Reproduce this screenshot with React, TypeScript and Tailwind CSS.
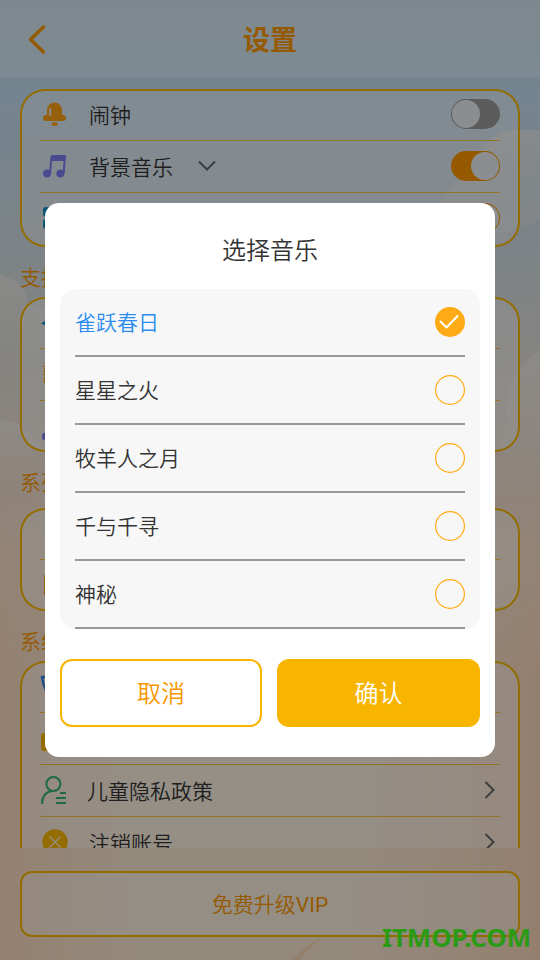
import type { ReactNode } from "react";

const songs = ["雀跃春日", "星星之火", "牧羊人之月", "千与千寻", "神秘"];

function Sky() {
  return (
    <svg
      className="absolute inset-0 h-full w-full"
      viewBox="0 0 540 960"
      preserveAspectRatio="none"
    >
      <defs>
        <linearGradient id="sky" x1="0" y1="0" x2="0" y2="1">
          <stop offset="0" stopColor="#c0dae8" />
          <stop offset="0.1" stopColor="#c2dcf0" />
          <stop offset="0.25" stopColor="#cfdbe0" />
          <stop offset="0.36" stopColor="#dddcd8" />
          <stop offset="0.46" stopColor="#e8ddd2" />
          <stop offset="0.6" stopColor="#f8e4d0" />
          <stop offset="1" stopColor="#fae4cc" />
        </linearGradient>
        <linearGradient id="glow" x1="0" y1="0" x2="1" y2="0">
          <stop offset="0" stopColor="#f6cdae" stopOpacity="0.6" />
          <stop offset="0.25" stopColor="#f3e6d0" stopOpacity="0.5" />
          <stop offset="0.65" stopColor="#f3e6d0" stopOpacity="0.5" />
          <stop offset="1" stopColor="#f6ceb0" stopOpacity="0.7" />
        </linearGradient>
        <linearGradient id="fade" x1="0" y1="0" x2="0" y2="1">
          <stop offset="0" stopColor="#fff" stopOpacity="0" />
          <stop offset="0.5" stopColor="#fff" />
        </linearGradient>
        <mask id="low">
          <rect y="400" width="540" height="560" fill="url(#fade)" />
        </mask>
        <linearGradient id="cloud" x1="0" y1="0" x2="0" y2="1">
          <stop offset="0" stopColor="#f1ece8" stopOpacity="0.6" />
          <stop offset="1" stopColor="#f4eae2" stopOpacity="0.1" />
        </linearGradient>
      </defs>
      <rect width="540" height="960" fill="url(#sky)" />
      <rect y="400" width="540" height="560" fill="url(#glow)" mask="url(#low)" />
      <path
        d="M440 203C450 192 452 180 470 178C474 150 490 128 525 130L540 130V200C510 222 480 232 440 240Z"
        fill="url(#cloud)"
      />
      <path
        d="M470 230C505 222 525 208 540 200V220C520 228 500 234 470 238Z"
        fill="#f1ece8"
        opacity="0.35"
      />
      <path d="M0 275C18 279 30 292 27 305C50 305 70 330 80 348H0Z" fill="url(#cloud)" />
      <path d="M0 420C20 419 36 435 44 455V480H0Z" fill="url(#cloud)" />
      <path d="M540 350C515 368 502 395 507 418C502 440 500 470 480 495H540Z" fill="url(#cloud)" />
      <path d="M292 960Q306 944 322 938Q306 950 300 960Z" fill="#f3c9a4" opacity="0.6" />
    </svg>
  );
}

function BellIcon() {
  return (
    <svg width="24" height="24" viewBox="0 0 24 24">
      <path
        d="M4 13V8a7.500 7.500 0 0 1 15 0v5h1a3 3 0 0 1 0 6h-17a3 3 0 0 1 0-6z"
        fill="#f89e14"
      />
      <rect x="6.200" y="6" width="2" height="8" rx="1" fill="#e9edef" />
      <rect x="8.500" y="20.300" width="6" height="3.400" rx="1.500" fill="#f89e14" />
    </svg>
  );
}

function NotesIcon() {
  return (
    <svg width="24" height="24" viewBox="0 0 24 24">
      <path d="M8.500 3L7 19.500M21.800 3l-1.100 16.500" stroke="#7c7cf0" strokeWidth="2" fill="none" />
      <path d="M7.500 3a2 2 0 0 1 2-2H23l-.5 6H7.300z" fill="#7c7cf0" />
      <circle cx="4" cy="19.400" r="4" fill="#7c7cf0" />
      <circle cx="17.400" cy="19.400" r="4" fill="#7c7cf0" />
    </svg>
  );
}

function GridIcon() {
  return (
    <svg width="24" height="24" viewBox="0 0 24 24" fill="#1590c5">
      <rect x="1" y="1" width="10" height="10" rx="3" />
      <rect x="13" y="1" width="10" height="10" rx="3" />
      <rect x="1" y="13" width="10" height="10" rx="3" />
      <rect x="13" y="13" width="10" height="10" rx="3" />
    </svg>
  );
}

function PersonIcon() {
  return (
    <svg width="28" height="28" viewBox="0 0 28 28" fill="none" stroke="#36b078" strokeWidth="2">
      <circle cx="13.400" cy="8" r="7" />
      <path d="M2 28C2 20.500 6 15.500 12 15M20 17h6M16 22h10M16 27h10" />
    </svg>
  );
}

function CloseIcon() {
  return (
    <svg width="26" height="26" viewBox="0 0 26 26">
      <circle cx="13" cy="13" r="12.700" fill="#f7b500" />
      <path d="M7.500 7.500l11 11M18.500 7.500l-11 11" stroke="#f5efe4" strokeWidth="1.200" />
    </svg>
  );
}

function Toggle({ on }: { on?: boolean }) {
  return (
    <span
      className={`flex h-[30px] w-[49px] items-center rounded-full p-px ${
        on ? "justify-end bg-[#f89600]" : "justify-start bg-[#999999]"
      }`}
    >
      <span className="h-7 w-7 rounded-full bg-[#e8edf1]" />
    </span>
  );
}

function RowArrow() {
  return (
    <svg className="mr-1 ml-auto" width="12" height="18" viewBox="0 0 12 18" fill="none">
      <path d="M1.500 1l8 8-8 8" stroke="#666" strokeWidth="2" />
    </svg>
  );
}

function Row({
  icon,
  label,
  children,
  last,
  narrow,
}: {
  icon?: ReactNode;
  label?: string;
  children?: ReactNode;
  last?: boolean;
  narrow?: boolean;
}) {
  return (
    <div
      className={`flex h-[52px] shrink-0 items-center ${
        last ? "pb-0.5" : "border-b border-[#f5b400]/75 pb-px"
      }`}
    >
      <span className={`flex shrink-0 items-center ${narrow ? "w-[47px]" : "w-[49px]"}`}>
        {icon}
      </span>
      <span className="text-[21px] leading-[30px] text-[#333]">{label}</span>
      {children}
    </div>
  );
}

function Card({ className, children }: { className: string; children: ReactNode }) {
  return (
    <div
      className={`flex shrink-0 flex-col overflow-hidden rounded-[25px] bg-white/35 px-5 ring-2 ring-[#f5b400] ring-inset ${className}`}
    >
      {children}
    </div>
  );
}

function App() {
  return (
    <div
      className="relative h-[960px] w-[540px] overflow-hidden font-[350]"
      style={{ fontFamily: '"Noto Sans CJK SC", sans-serif' }}
    >
      <Sky />

      <div className="relative flex h-full flex-col">
        <header className="grid h-[77px] shrink-0 grid-cols-3 items-center bg-white/30 px-5">
          <svg width="32" height="32" viewBox="0 0 32 32" fill="none">
            <path
              d="M23.500 4L10.500 16.500L23.500 29"
              stroke="#f89600"
              strokeWidth="3.400"
              strokeLinecap="round"
              strokeLinejoin="round"
            />
          </svg>
          <h1 className="pt-0.5 text-center text-[27px] font-bold text-[#f89600]">设置</h1>
        </header>

        <main className="flex h-[771px] shrink-0 flex-col overflow-hidden px-5 pt-3">
          <Card className="h-[158px]">
            <Row icon={<span className="pl-[3px]"><BellIcon /></span>} label="闹钟">
              <span className="ml-auto"><Toggle /></span>
            </Row>
            <Row icon={<span className="pl-[3px]"><NotesIcon /></span>} label="背景音乐">
              <svg className="ml-[25px]" width="18" height="12" viewBox="0 0 18 12" fill="none">
                <path d="M1 1.500l8 8 8-8" stroke="#666" strokeWidth="2" />
              </svg>
              <span className="ml-auto"><Toggle on /></span>
            </Row>
            <Row icon={<span className="pl-[2px]"><GridIcon /></span>} last>
              <span className="ml-auto"><Toggle on /></span>
            </Row>
          </Card>

          <h2 className="flex h-[50px] shrink-0 items-center pt-2.5 text-[21px] text-[#f89600]">
            支持
          </h2>
          <Card className="h-[155px]">
            <Row
              icon={
                <svg width="28" height="24" viewBox="0 0 28 24" fill="#1590c5">
                  <path d="M1 13.500Q4 12 8 8v8Q4 15 1 13.500z" />
                </svg>
              }
            />
            <Row icon={<span className="pl-0.5 text-[21px] text-[#f89e14]">歌</span>} />
            <Row icon={<span className="pt-1.5 pl-[2px]"><NotesIcon /></span>} last />
          </Card>

          <h2 className="flex h-14 shrink-0 items-center pt-1 text-[21px] text-[#f89600]">系列</h2>
          <Card className="h-[103px]">
            <Row
              icon={
                <svg width="28" height="24" viewBox="0 0 28 24" fill="#36b078">
                  <path d="M4 11h20v2H6z" />
                </svg>
              }
            />
            <Row icon={<span className="ml-1 h-5 w-5 bg-[#f89e14]" />} last />
          </Card>

          <h2 className="flex h-[50px] shrink-0 items-center pt-2.5 text-[21px] text-[#f89600]">
            系统
          </h2>
          <Card className="h-[240px]">
            <Row
              icon={
                <svg width="28" height="26" viewBox="0 0 28 26" fill="none">
                  <path d="M2 4h24v8q-2 9-12 13Q4 20 2 4z" stroke="#3a83e0" strokeWidth="2.400" />
                </svg>
              }
            />
            <Row icon={<span className="ml-px mt-2 h-[18px] w-6 rounded-[3px] bg-[#f7b500]" />} />
            <Row icon={<PersonIcon />} label="儿童隐私政策" narrow>
              <RowArrow />
            </Row>
            <Row icon={<span className="pl-[2px]"><CloseIcon /></span>} label="注销账号" last>
              <RowArrow />
            </Row>
          </Card>
        </main>

        <footer className="px-5 pt-[23px]">
          <button
            className="h-[66px] w-full rounded-xl border-2 border-[#f5b400] bg-white/30 pt-0.5 text-[21px] text-[#f89600]"
          >
            免费升级<span className="font-[Roboto] font-normal">VIP</span>
          </button>
        </footer>
      </div>

      <div className="absolute inset-0 bg-black/40 px-[45px] pt-[203px]">
        <div className="flex h-[554px] flex-col rounded-[14px] bg-white px-[15px]">
          <h2 className="flex h-[86px] items-center justify-center pt-1.5 text-2xl text-[#333]">
            选择音乐
          </h2>
          <ul className="rounded-[15px] bg-[#f7f7f7] px-[15px]">
            {songs.map((song, index) => (
              <li
                key={song}
                className="flex h-[68px] items-center justify-between border-b-2 border-[#999] text-[21px]"
              >
                <span className={index === 0 ? "text-[#2b8df0]" : "text-[#333]"}>{song}</span>
                {index === 0 ? (
                  <svg width="30" height="30" viewBox="0 0 30 30" fill="none">
                    <circle cx="15" cy="15" r="15" fill="#ffab15" />
                    <path
                      d="M5.500 14.500l6 6L22.500 9"
                      stroke="#fff"
                      strokeWidth="2"
                      strokeLinecap="round"
                      strokeLinejoin="round"
                    />
                  </svg>
                ) : (
                  <svg width="30" height="30" viewBox="0 0 30 30" fill="none">
                    <circle cx="15" cy="15" r="14.400" stroke="#ffab15" strokeWidth="1.200" />
                  </svg>
                )}
              </li>
            ))}
          </ul>
          <div className="mt-[30px] flex gap-[15px] text-2xl">
            <button className="h-[68px] w-[202px] rounded-xl border-2 border-[#f7b500] pb-0.5 text-[#f89600]">
              取消
            </button>
            <button className="h-[68px] flex-1 rounded-xl bg-[#f7b500] pb-0.5 text-white">
              确认
            </button>
          </div>
        </div>
      </div>

      <span className="absolute top-[919px] right-[9px] font-['Noto_Sans'] text-[25.8px] leading-9 font-bold text-[#2b9a14]">
        ITMOP.COM
      </span>
    </div>
  );
}

export default App;
